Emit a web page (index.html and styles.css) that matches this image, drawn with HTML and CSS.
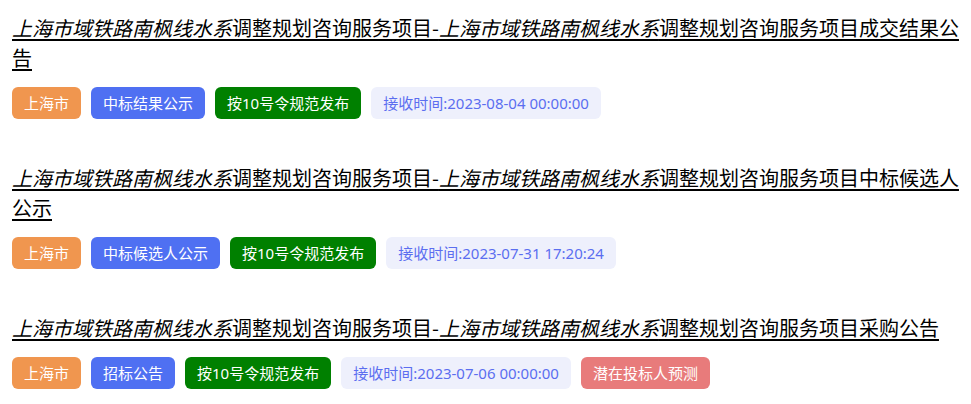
FILE: index.html
```html
<!DOCTYPE html>
<html lang="zh-CN">
<head>
    <meta charset="UTF-8">
    <meta name="viewport" content="width=device-width, initial-scale=1.0">
    <title>招标公告列表</title>
    <link rel="stylesheet" href="styles.css">
</head>
<body>
    <div class="list">
        <div class="item">
            <a class="title" href="#"><em>上海市域铁路南枫线水系</em>调整规划咨询服务项目-<em>上海市域铁路南枫线水系</em>调整规划咨询服务项目成交结果公告</a>
            <div class="tags">
                <span class="tag area">上海市</span>
                <span class="tag type">中标结果公示</span>
                <span class="tag rule">按10号令规范发布</span>
                <span class="tag time">接收时间:2023-08-04 00:00:00</span>
            </div>
        </div>
        <div class="item">
            <a class="title" href="#"><em>上海市域铁路南枫线水系</em>调整规划咨询服务项目-<em>上海市域铁路南枫线水系</em>调整规划咨询服务项目中标候选人公示</a>
            <div class="tags">
                <span class="tag area">上海市</span>
                <span class="tag type">中标候选人公示</span>
                <span class="tag rule">按10号令规范发布</span>
                <span class="tag time">接收时间:2023-07-31 17:20:24</span>
            </div>
        </div>
        <div class="item">
            <a class="title" href="#"><em>上海市域铁路南枫线水系</em>调整规划咨询服务项目-<em>上海市域铁路南枫线水系</em>调整规划咨询服务项目采购公告</a>
            <div class="tags">
                <span class="tag area">上海市</span>
                <span class="tag type">招标公告</span>
                <span class="tag rule">按10号令规范发布</span>
                <span class="tag time">接收时间:2023-07-06 00:00:00</span>
                <span class="tag predict">潜在投标人预测</span>
            </div>
        </div>
    </div>
</body>
</html>
```

FILE: styles.css
```css
body {
    margin: 0;
    font-family: "Microsoft YaHei", "Noto Sans CJK SC", "Noto Sans", sans-serif;
    background: #fff;
}
.list {
    padding: 13px 8px 0 12px;
}
.item {
    margin-bottom: 44px;
}
.item:last-child {
    margin-bottom: 0;
}
.title {
    display: block;
    font-size: 20px;
    line-height: 30px;
    color: #000;
    text-decoration: underline;
    text-decoration-thickness: 2px;
    text-underline-offset: 3px;
}
.title em {
    font-style: italic;
}
.tags {
    display: flex;
    flex-wrap: wrap;
    gap: 10px;
    margin-top: 14px;
}
.tag {
    height: 32px;
    line-height: 32px;
    padding: 0 12px;
    border-radius: 6px;
    font-family: "Noto Sans", "Noto Sans CJK SC", sans-serif;
    font-size: 15px;
    color: #fff;
}
.area { background: #f0964f; }
.type { background: #4f70f2; }
.rule { background: #008000; }
.time {
    background: #eef0fc;
    color: #5b6ef0;
}
.predict { background: #e87b7b; }
```
